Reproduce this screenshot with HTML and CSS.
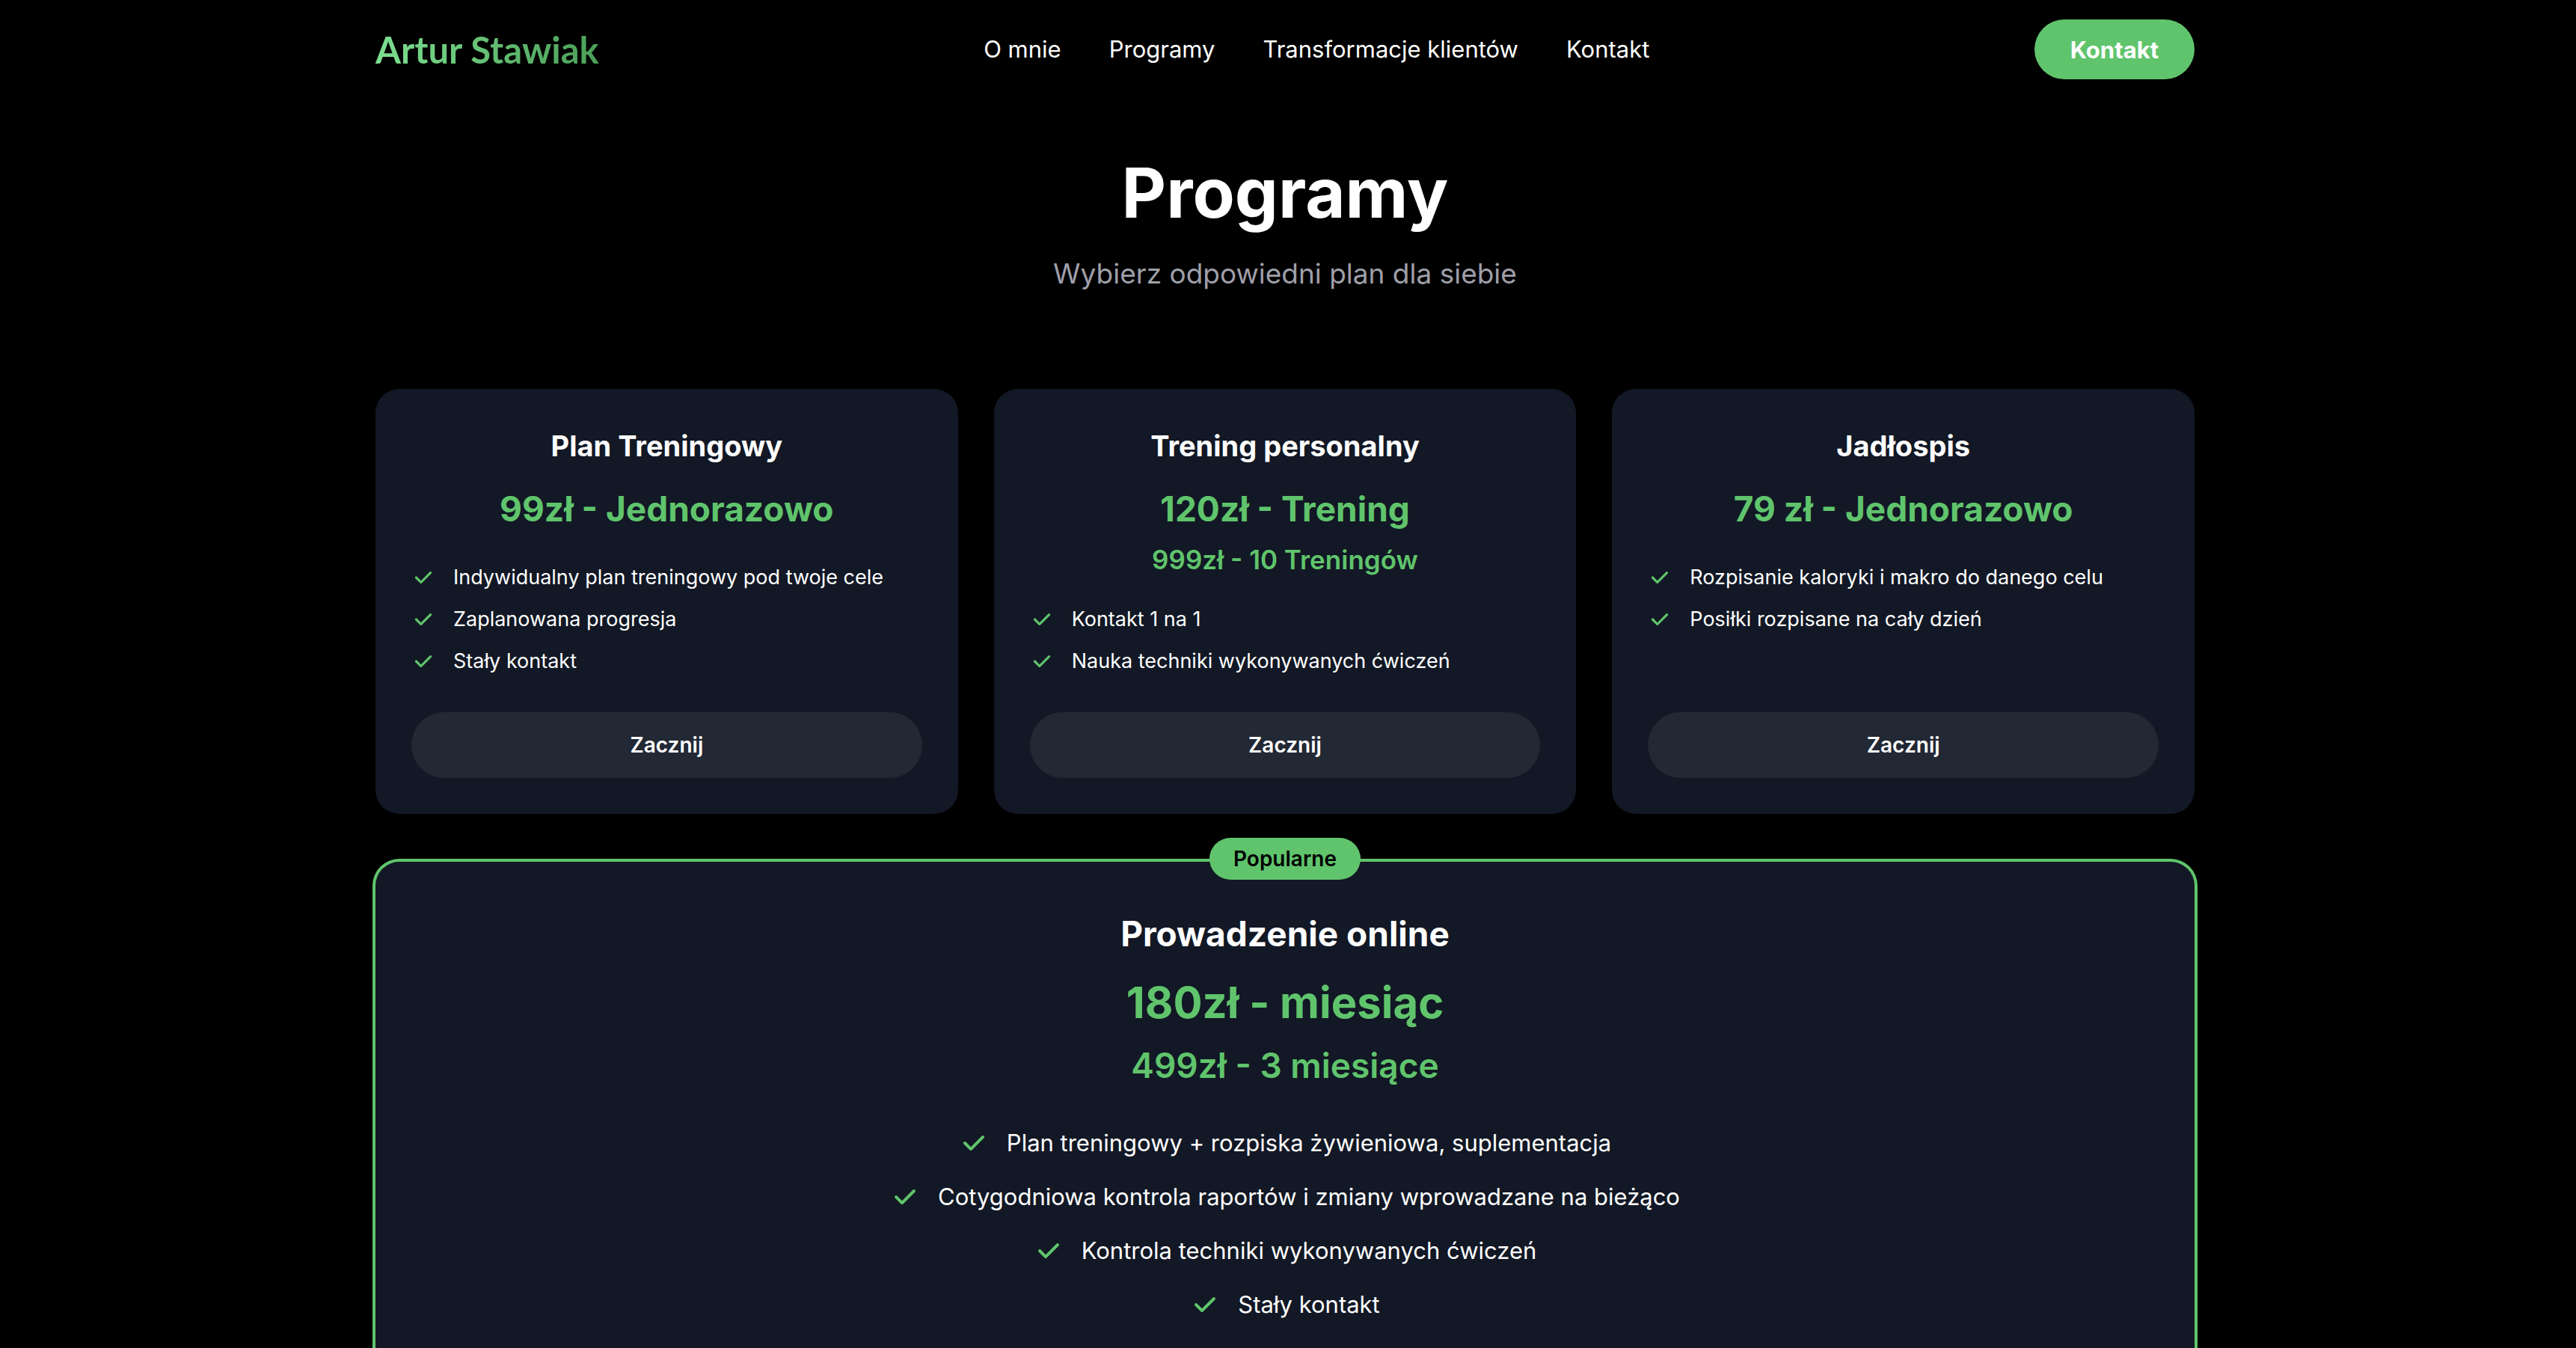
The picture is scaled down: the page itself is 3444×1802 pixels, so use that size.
FILE: index.html
```html
<!DOCTYPE html>
<html lang="pl">
<head>
<meta charset="utf-8">
<meta name="viewport" content="width=device-width, initial-scale=1">
<title>Artur Stawiak</title>
<link rel="stylesheet" href="styles.css">
</head>
<body>
<svg class="sprite" aria-hidden="true">
  <symbol id="check" viewBox="0 0 20 20">
    <path fill="currentColor" fill-rule="evenodd" clip-rule="evenodd" d="M16.707 5.293a1 1 0 010 1.414l-8 8a1 1 0 01-1.414 0l-4-4a1 1 0 011.414-1.414L8 12.586l7.293-7.293a1 1 0 011.414 0z"/>
  </symbol>
</svg>
<div class="page">
  <header class="header container">
    <a class="logo" href="#">Artur Stawiak</a>
    <nav class="nav">
      <a href="#o-mnie">O mnie</a>
      <a href="#programy">Programy</a>
      <a href="#transformacje">Transformacje klientów</a>
      <a href="#kontakt">Kontakt</a>
    </nav>
    <button class="contact" type="button">Kontakt</button>
  </header>

  <main class="container" id="programy">
    <div class="intro">
      <h1>Programy</h1>
      <p>Wybierz odpowiedni plan dla siebie</p>
    </div>

    <div class="plans">
      <section class="card">
        <h2>Plan Treningowy</h2>
        <p class="price">99zł - Jednorazowo</p>
        <ul class="features">
          <li><svg class="tick"><use href="#check"/></svg><span>Indywidualny plan treningowy pod twoje cele</span></li>
          <li><svg class="tick"><use href="#check"/></svg><span>Zaplanowana progresja</span></li>
          <li><svg class="tick"><use href="#check"/></svg><span>Stały kontakt</span></li>
        </ul>
        <button class="start" type="button">Zacznij</button>
      </section>

      <section class="card">
        <h2>Trening personalny</h2>
        <p class="price">120zł - Trening</p>
        <p class="bundle">999zł - 10 Treningów</p>
        <ul class="features">
          <li><svg class="tick"><use href="#check"/></svg><span>Kontakt 1 na 1</span></li>
          <li><svg class="tick"><use href="#check"/></svg><span>Nauka techniki wykonywanych ćwiczeń</span></li>
        </ul>
        <button class="start" type="button">Zacznij</button>
      </section>

      <section class="card">
        <h2>Jadłospis</h2>
        <p class="price">79 zł - Jednorazowo</p>
        <ul class="features">
          <li><svg class="tick"><use href="#check"/></svg><span>Rozpisanie kaloryki i makro do danego celu</span></li>
          <li><svg class="tick"><use href="#check"/></svg><span>Posiłki rozpisane na cały dzień</span></li>
        </ul>
        <button class="start" type="button">Zacznij</button>
      </section>
    </div>

    <section class="featured">
      <span class="badge">Popularne</span>
      <h2>Prowadzenie online</h2>
      <p class="price">180zł - miesiąc</p>
      <p class="bundle">499zł - 3 miesiące</p>
      <ul class="features">
        <li><svg class="tick"><use href="#check"/></svg><span>Plan treningowy + rozpiska żywieniowa, suplementacja</span></li>
        <li><svg class="tick"><use href="#check"/></svg><span>Cotygodniowa kontrola raportów i zmiany wprowadzane na bieżąco</span></li>
        <li><svg class="tick"><use href="#check"/></svg><span>Kontrola techniki wykonywanych ćwiczeń</span></li>
        <li><svg class="tick"><use href="#check"/></svg><span>Stały kontakt</span></li>
      </ul>
    </section>
  </main>
</div>
</body>
</html>
```
FILE: styles.css
```css
:root {
  --green: #60c46c;
  --card: #121825;
  --button: #222834;
  --muted: #9f9fa9;
}

* {
  box-sizing: border-box;
  margin: 0;
  padding: 0;
}

body {
  background: #000;
  color: #fff;
  font-family: Inter, "Liberation Sans", sans-serif;
}

a {
  color: inherit;
  text-decoration: none;
}

button {
  border: 0;
  border-radius: 999px;
  color: #fff;
  font-family: inherit;
  cursor: pointer;
}

ul {
  list-style: none;
}

.sprite {
  display: none;
}

.page {
  height: 100vh;
  padding-right: 8px;
  overflow-y: auto;
  scrollbar-width: none;
}

.container {
  width: 100%;
  max-width: 2560px;
  margin: 0 auto;
  padding: 0 64px;
}

.header {
  display: flex;
  align-items: center;
  justify-content: space-between;
  padding-top: 26px;
  padding-bottom: 26px;
}

.logo {
  font-family: Lato, sans-serif;
  font-size: 49px;
  font-weight: 700;
  line-height: 64px;
  background: linear-gradient(90deg, #7ddf90, #4b9f58);
  background-clip: text;
  color: transparent;
}

.nav {
  display: flex;
  gap: 64px;
  font-size: 31px;
  line-height: 48px;
}

.contact {
  height: 80px;
  padding: 0 48px;
  background: var(--green);
  font-size: 31px;
  font-weight: 700;
}

.intro {
  padding: 78px 0 126px;
  text-align: center;
}

.intro h1 {
  font-size: 92px;
  line-height: 96px;
}

.intro p {
  margin-top: 32px;
  color: var(--muted);
  font-size: 37px;
  line-height: 56px;
}

.plans {
  display: grid;
  grid-template-columns: repeat(3, 1fr);
  gap: 48px;
}

.card {
  display: flex;
  flex-direction: column;
  padding: 48px;
  border-radius: 32px;
  background: var(--card);
}

.card h2 {
  font-size: 38px;
  line-height: 56px;
  text-align: center;
}

.price,
.bundle {
  color: var(--green);
  text-align: center;
}

.price {
  margin-top: 24px;
  font-size: 46px;
  font-weight: 700;
  line-height: 64px;
}

.bundle {
  margin-top: 16px;
  font-size: 35px;
  font-weight: 600;
  line-height: 40px;
}

.features {
  display: flex;
  flex-direction: column;
  flex-grow: 1;
  gap: 16px;
  margin-top: 40px;
  font-size: 27px;
  line-height: 40px;
}

.features li {
  display: flex;
  align-items: center;
  gap: 24px;
}

.tick {
  flex: none;
  width: 32px;
  height: 32px;
  color: var(--green);
}

.start {
  height: 88px;
  margin-top: 48px;
  background: var(--button);
  font-size: 28px;
  font-weight: 600;
}

.featured {
  position: relative;
  margin-top: 64px;
  padding: 64px;
  border-radius: 32px;
  background: var(--card);
  box-shadow: 0 0 0 4px var(--green);
  text-align: center;
}

.badge {
  position: absolute;
  top: -32px;
  left: 50%;
  padding: 8px 32px;
  border-radius: 999px;
  background: var(--green);
  color: #000;
  font-size: 28px;
  font-weight: 600;
  line-height: 40px;
  transform: translateX(-50%);
}

.featured h2 {
  font-size: 46px;
  line-height: 64px;
}

.featured .price {
  font-size: 58px;
  line-height: 72px;
}

.featured .bundle {
  font-size: 46px;
  line-height: 64px;
}

.featured .features {
  align-items: center;
  gap: 24px;
  margin-top: 48px;
  font-size: 31px;
  line-height: 48px;
}

.featured .tick {
  width: 40px;
  height: 40px;
}
```
